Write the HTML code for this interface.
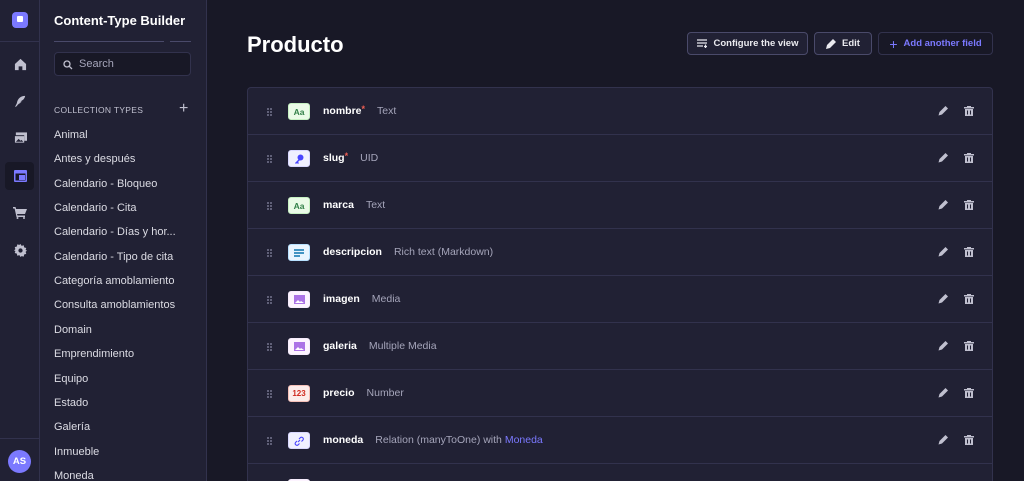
<!DOCTYPE html><html style="width:1024px;height:481px;overflow:hidden"><head><meta charset="utf-8"><style>
*{box-sizing:border-box;margin:0;padding:0}
body{width:1024px;height:481px;overflow:hidden;background:#181826;font-family:"Liberation Sans",sans-serif;color:#eaeaef;position:relative}
.rail{position:absolute;left:0;top:0;width:40px;height:481px;background:#212134;border-right:1px solid #32324d}
.rail .ic{position:absolute;left:8px;width:24px;height:24px;display:flex;align-items:center;justify-content:center}
.side{position:absolute;left:40px;top:0;width:167px;height:481px;background:#212134;border-right:1px solid #32324d;overflow:hidden}
.side h1{position:absolute;left:14px;top:13px;font-size:13px;font-weight:bold;color:#fff;white-space:nowrap}
.search{position:absolute;left:14px;top:52px;width:137px;height:24px;border:1px solid #32324d;border-radius:4px;background:#181826;font-size:11px;color:#a5a5ba;padding:5px 0 0 24px}
.ct{position:absolute;left:14px;top:105px;font-size:8.5px;letter-spacing:.3px;color:#c0c0cf}
.side .it{position:absolute;left:14px;font-size:11px;color:#dcdce4;white-space:nowrap}
.title{position:absolute;left:247px;top:32px;font-size:22px;font-weight:bold;color:#fff}
.btn{position:absolute;top:32px;height:23px;border:1px solid #4a4a6a;border-radius:4px;font-size:9.5px;font-weight:bold;color:#eaeaef;display:flex;align-items:center;justify-content:center;gap:6px;background:#212134}
.tbl{position:absolute;left:247px;top:87px;width:746px;height:394px;overflow:hidden;background:#212134;border:1px solid #32324d;border-bottom:none;border-radius:4px 4px 0 0}
.row{position:absolute;left:0;width:744px;height:47px;border-bottom:1px solid #32324d}
.row .d{position:absolute;left:19px;top:20px}
.row .b{position:absolute;left:40px;top:15px;width:22px;height:17px;border-radius:3px;display:flex;align-items:center;justify-content:center;font-size:8.5px;font-weight:bold}
.row .n{position:absolute;left:75px;top:17px;font-size:10.5px;font-weight:bold;color:#fff;white-space:nowrap}
.row .n sup{color:#ee5e52;font-size:9px;vertical-align:top;line-height:8px}
.row .t{font-weight:normal;color:#a5a5ba;margin-left:12px}
.row .p{position:absolute;left:690px;top:18px}
.row .tr{position:absolute;left:716px;top:18px}
</style></head><body>
<div class="rail">
 <div class="ic" style="top:8px"><div style="width:16px;height:16px;background:#7b79ff;border-radius:4px;position:relative"><div style="position:absolute;left:5px;top:4px;width:6px;height:6px;background:#fff;border-radius:1px"></div></div></div>
 <div style="position:absolute;left:0;top:41px;width:40px;border-top:1px solid #32324d"></div>
 <div class="ic" style="top:52px"><svg width="13" height="13" viewBox="0 0 14 14"><path d="M7 1L1 6.5V13h4V9h4v4h4V6.5z" fill="#c0c0cf"/></svg></div>
 <div class="ic" style="top:89px"><svg width="13" height="13" viewBox="0 0 14 14"><path d="M12 1C7 1 4 4 3 9L1 13l2-1c1-2 3-3 5-4l-2 0 3-1-2 0 3-2C11 4 12 2 12 1z" fill="#c0c0cf"/></svg></div>
 <div class="ic" style="top:126px"><svg width="13" height="12" viewBox="0 0 14 12"><rect x="2" y="0" width="12" height="9" fill="#c0c0cf"/><rect x="0" y="3" width="11" height="9" fill="#212134"/><rect x="1" y="4" width="10" height="7" fill="#c0c0cf"/><path d="M2 10l3-3 2 2 1-1 2 2z" fill="#212134"/></svg></div>
 <div style="position:absolute;left:5px;top:162px;width:29px;height:28px;background:#181826;border-radius:4px"></div>
 <div class="ic" style="top:164px"><svg width="13" height="12" viewBox="0 0 13 12"><rect width="13" height="12" rx="1" fill="#7b79ff"/><rect x="1.5" y="3.5" width="10" height="7" fill="#181826"/><rect x="5" y="5" width="6" height="5" fill="#7b79ff"/></svg></div>
 <div class="ic" style="top:201px"><svg width="14" height="12" viewBox="0 0 14 12"><path d="M0 0h2.5l.6 2H14l-2 5H4l.5 1.5H12V10H3.5L1.6 1.5H0z" fill="#c0c0cf"/><circle cx="4.5" cy="11" r="1" fill="#c0c0cf"/><circle cx="11" cy="11" r="1" fill="#c0c0cf"/></svg></div>
 <div class="ic" style="top:238px"><svg width="13" height="13" viewBox="0 0 14 14"><path d="M7 0l1.2 2 2.3-.6.4 2.3 2.3.6-.7 2.2L14 7l-1.5 1.5.7 2.2-2.3.6-.4 2.3-2.3-.6L7 14l-1.2-2-2.3.6-.4-2.3-2.3-.6.7-2.2L0 7l1.5-1.5-.7-2.2 2.3-.6.4-2.3 2.3.6z" fill="#c0c0cf"/><circle cx="7" cy="7" r="2.3" fill="#212134"/></svg></div>
 <div style="position:absolute;left:0;top:438px;width:40px;border-top:1px solid #32324d"></div>
 <div style="position:absolute;left:8px;top:450px;width:23px;height:23px;border-radius:50%;background:#7b79ff;color:#fff;font-size:9.5px;font-weight:bold;display:flex;align-items:center;justify-content:center">AS</div>
</div>
<div class="side">
 <h1>Content-Type Builder</h1>
 <div style="position:absolute;left:14px;top:41px;width:110px;border-top:1px solid #4a4a6a"></div>
 <div style="position:absolute;left:130px;top:41px;width:21px;border-top:1px solid #4a4a6a"></div>
 <div class="search"><svg style="position:absolute;left:8px;top:7px" width="10" height="10" viewBox="0 0 10 10"><circle cx="4" cy="4" r="3" stroke="#c0c0cf" stroke-width="1.3" fill="none"/><path d="M6.3 6.3L9 9" stroke="#c0c0cf" stroke-width="1.3"/></svg>Search</div>
 <div class="ct">COLLECTION TYPES</div>
 <div style="position:absolute;left:139px;top:101px;font-size:16px;color:#c0c0cf;line-height:16px">+</div>
 <div class="it" style="top:129px">Animal</div>
 <div class="it" style="top:153px">Antes y después</div>
 <div class="it" style="top:178px">Calendario - Bloqueo</div>
 <div class="it" style="top:202px">Calendario - Cita</div>
 <div class="it" style="top:226px">Calendario - Días y hor...</div>
 <div class="it" style="top:251px">Calendario - Tipo de cita</div>
 <div class="it" style="top:275px">Categoría amoblamiento</div>
 <div class="it" style="top:299px">Consulta amoblamientos</div>
 <div class="it" style="top:324px">Domain</div>
 <div class="it" style="top:348px">Emprendimiento</div>
 <div class="it" style="top:373px">Equipo</div>
 <div class="it" style="top:397px">Estado</div>
 <div class="it" style="top:421px">Galería</div>
 <div class="it" style="top:446px">Inmueble</div>
 <div class="it" style="top:470px">Moneda</div>
</div>
<div class="title">Producto</div>
<div class="btn" style="left:687px;width:121px"><svg width="11" height="9" viewBox="0 0 11 9"><path d="M0 1h10M0 4h10M0 7h6M8.5 5.5v3.5M7 7.5h3" stroke="#eaeaef" stroke-width="1.2"/></svg>Configure the view</div>
<div class="btn" style="left:814px;width:58px"><svg width="10" height="10" viewBox="0 0 10 10"><path d="M7 0l3 3-6 6-4 1 1-4z" fill="#eaeaef"/></svg>Edit</div>
<div class="btn" style="left:878px;width:115px;color:#7b79ff;background:#181826;border-color:#32324d"><span style="font-size:14px;font-weight:normal;color:#7b79ff">+</span>Add another field</div>
<div class="tbl">
<svg width="0" height="0" style="position:absolute"><defs>
<g id="dots"><circle cx="1" cy="1" r=".9" fill="#8e8ea9"/><circle cx="4" cy="1" r=".9" fill="#8e8ea9"/><circle cx="1" cy="4" r=".9" fill="#8e8ea9"/><circle cx="4" cy="4" r=".9" fill="#8e8ea9"/><circle cx="1" cy="7" r=".9" fill="#8e8ea9"/><circle cx="4" cy="7" r=".9" fill="#8e8ea9"/></g>
<g id="pen"><path d="M7.5 0l2.5 2.5-6 6-3.5 1 1-3.5z" fill="#c0c0cf"/></g>
<g id="tr"><path d="M3 0h4v1h3v1.5H0V1h3zM1 3h8v7H1z" fill="#c0c0cf"/><path d="M3.5 4.5v4M6.5 4.5v4" stroke="#212134" stroke-width="1"/></g>
</defs></svg>
<div class="row" style="top:0"><svg class="d" width="5" height="8"><use href="#dots"/></svg><div class="b" style="background:#eafbe7;border:1px solid #c6f0c2;color:#328048">Aa</div><div class="n">nombre<sup>*</sup><span class="t">Text</span></div><svg class="p" width="10" height="10"><use href="#pen"/></svg><svg class="tr" width="10" height="10"><use href="#tr"/></svg></div>
<div class="row" style="top:47px"><svg class="d" width="5" height="8"><use href="#dots"/></svg><div class="b" style="background:#f0f0ff;border:1px solid #d9d8ff"><svg width="10" height="10" viewBox="0 0 10 10"><circle cx="6.5" cy="3.5" r="3" fill="#4945ff"/><path d="M5 5L1 9l1 1 1-1 1 1 1-1-1-1 2-2z" fill="#4945ff"/></svg></div><div class="n">slug<sup>*</sup><span class="t">UID</span></div><svg class="p" width="10" height="10"><use href="#pen"/></svg><svg class="tr" width="10" height="10"><use href="#tr"/></svg></div>
<div class="row" style="top:94px"><svg class="d" width="5" height="8"><use href="#dots"/></svg><div class="b" style="background:#eafbe7;border:1px solid #c6f0c2;color:#328048">Aa</div><div class="n">marca<span class="t">Text</span></div><svg class="p" width="10" height="10"><use href="#pen"/></svg><svg class="tr" width="10" height="10"><use href="#tr"/></svg></div>
<div class="row" style="top:141px"><svg class="d" width="5" height="8"><use href="#dots"/></svg><div class="b" style="background:#eaf5ff;border:1px solid #b8e1ff"><svg width="10" height="8"><path d="M0 1h10M0 4h10M0 7h6" stroke="#0c75af" stroke-width="1.4"/></svg></div><div class="n">descripcion<span class="t">Rich text (Markdown)</span></div><svg class="p" width="10" height="10"><use href="#pen"/></svg><svg class="tr" width="10" height="10"><use href="#tr"/></svg></div>
<div class="row" style="top:188px"><svg class="d" width="5" height="8"><use href="#dots"/></svg><div class="b" style="background:#fdf4ff;border:1px solid #f6ecfc"><svg width="11" height="9"><rect width="11" height="9" fill="#ac73e6"/><path d="M1 8l3-3 2 2 1-1 3 2z" fill="#fff"/></svg></div><div class="n">imagen<span class="t">Media</span></div><svg class="p" width="10" height="10"><use href="#pen"/></svg><svg class="tr" width="10" height="10"><use href="#tr"/></svg></div>
<div class="row" style="top:235px"><svg class="d" width="5" height="8"><use href="#dots"/></svg><div class="b" style="background:#fdf4ff;border:1px solid #f6ecfc"><svg width="11" height="9"><rect width="11" height="9" fill="#ac73e6"/><path d="M1 8l3-3 2 2 1-1 3 2z" fill="#fff"/></svg></div><div class="n">galeria<span class="t">Multiple Media</span></div><svg class="p" width="10" height="10"><use href="#pen"/></svg><svg class="tr" width="10" height="10"><use href="#tr"/></svg></div>
<div class="row" style="top:282px"><svg class="d" width="5" height="8"><use href="#dots"/></svg><div class="b" style="background:#fcecea;border:1px solid #f5c0b8;color:#d02b20;font-size:8px">123</div><div class="n">precio<span class="t">Number</span></div><svg class="p" width="10" height="10"><use href="#pen"/></svg><svg class="tr" width="10" height="10"><use href="#tr"/></svg></div>
<div class="row" style="top:329px"><svg class="d" width="5" height="8"><use href="#dots"/></svg><div class="b" style="background:#f0f0ff;border:1px solid #d9d8ff"><svg width="10" height="10" viewBox="0 0 10 10"><path d="M4 6L6 4M3 5L1.5 6.5a1.8 1.8 0 002.5 2.5L5.5 7.5M5 3l1.5-1.5a1.8 1.8 0 012.5 2.5L7.5 5.5" stroke="#4945ff" stroke-width="1.1" fill="none"/></svg></div><div class="n">moneda<span class="t">Relation (manyToOne) with <span style="color:#7b79ff">Moneda</span></span></div><svg class="p" width="10" height="10"><use href="#pen"/></svg><svg class="tr" width="10" height="10"><use href="#tr"/></svg></div>
<div class="row" style="top:376px"><svg class="d" width="5" height="8"><use href="#dots"/></svg><div class="b" style="background:#fdf4ff;border:1px solid #f6ecfc"></div><div class="n">tipo<span class="t">Enumeration</span></div><svg class="p" width="10" height="10"><use href="#pen"/></svg><svg class="tr" width="10" height="10"><use href="#tr"/></svg></div>
</div>
</body></html>
